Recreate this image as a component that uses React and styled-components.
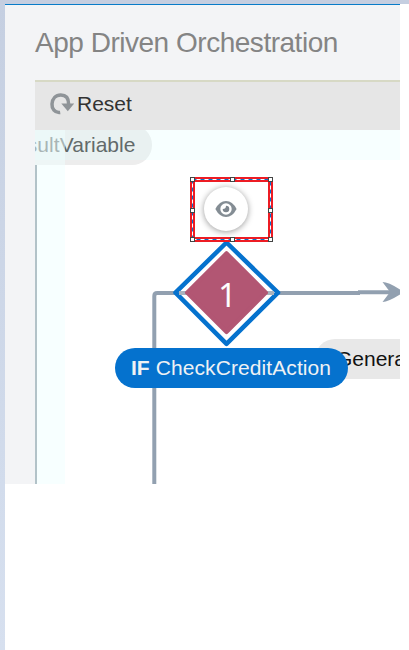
import React from "react";
import styled, { createGlobalStyle } from "styled-components";

const GlobalStyle = createGlobalStyle`
  * { box-sizing: border-box; }
  body { margin: 0; background: #fff; font-family: "Liberation Sans", Arial, sans-serif; }
`;

const Page = styled.main`
  width: 409px;
  height: 650px;
  display: grid;
  grid-template: 4px 480px 1fr / 5px 395px 1fr;
  overflow: hidden;
`;

const TopEdge = styled.div`
  grid-area: 1 / 1 / 2 / 4;
  background: #c5cee0;
`;

const SideEdge = styled.div`
  grid-area: 2 / 1 / 4 / 2;
  background: linear-gradient(#c5cfe1, #d2dcec 480px, #d7e0ef);
`;

const Panel = styled.section`
  grid-area: 2 / 2 / 3 / 3;
  display: flex;
  flex-direction: column;
  padding-left: 30px;
  border-top: 1px solid #087bc8;
  background: #f3f4f6;
  overflow: hidden;
`;

const Title = styled.h1`
  flex: 0 0 75px;
  margin: 0;
  font-size: 28px;
  font-weight: 400;
  line-height: 75px;
  letter-spacing: -0.48px;
  color: #848484;
  white-space: nowrap;
`;

const Toolbar = styled.div`
  flex: 0 0 50px;
  display: flex;
  align-items: center;
  padding: 0 0 4px 14px;
  border-top: 2px solid #d7d9c5;
  background: #e6e6e6;
`;

const ResetButton = styled.button`
  display: flex;
  align-items: center;
  gap: 3px;
  padding: 0;
  border: 0;
  background: none;
  font: 21px/24px "Liberation Sans", Arial, sans-serif;
  color: #333;
`;

const Canvas = styled.div`
  position: relative;
  flex: 1;
  overflow: hidden;
  background: #fff;
`;

const Node = styled.div`
  position: absolute;
  left: ${(p) => p.$x}px;
  top: ${(p) => p.$y}px;
  width: ${(p) => p.$w}px;
  height: 40px;
  padding-left: ${(p) => p.$pad}px;
  border-radius: 20px;
  background: ${(p) => p.$bg};
  color: ${(p) => p.$color};
  font-size: 21px;
  line-height: 39px;
  letter-spacing: ${(p) => p.$spacing || 0}px;
  white-space: nowrap;
`;

const CanvasEdge = styled.div`
  position: absolute;
  inset: 35px auto 0 0;
  width: 2px;
  background: #b2c2c8;
`;

const TopFade = styled.div`
  position: absolute;
  inset: 0 0 auto 0;
  height: 30px;
  background: rgba(220, 255, 255, 0.22);
`;

const LeftFade = styled.div`
  position: absolute;
  inset: 0 auto 0 0;
  width: 30px;
  background: rgba(240, 255, 255, 0.5);
`;

const Diagram = styled.svg`
  position: absolute;
  left: 0;
  top: 0;
`;

const PreviewButton = styled.button`
  position: absolute;
  left: 169px;
  top: 57px;
  width: 44px;
  height: 44px;
  display: grid;
  place-items: center;
  padding: 0;
  border: 0;
  border-radius: 50%;
  background: #fff;
  box-shadow: 0 1px 6px rgba(0, 0, 0, 0.4);
`;

const Bold = styled.b`
  margin-right: 6px;
  letter-spacing: 0;
`;

const ResetIcon = () => (
  <svg width="25" height="24" viewBox="0 0 25 24" fill="none">
    <path d="M11.2 20.5C5.7 21.3 2.7 16.5 3 12C3.4 6.5 6.7 3 11.8 3C17 3 19.6 6.5 19.6 12" stroke="#8f9498" strokeWidth="3.5" />
    <path d="M12.3 11.5H25.2L18.8 19.3Z" fill="#8f9498" />
  </svg>
);

const EyeIcon = () => (
  <svg width="22" height="18" viewBox="0 0 22 18" fill="none">
    <path d="M.4 9Q4.5 1 11 1Q17.5 1 21.6 9Q17.5 17 11 17Q4.5 17 .4 9Z" fill="#848d94" />
    <circle cx="11" cy="9" r="5.7" fill="#fff" />
    <path d="M11 5.7A3.3 3.3 0 1 1 7.7 9Q11 9 11 5.7Z" fill="#7d868e" />
  </svg>
);

const HANDLES = [
  [157.5, 49.5], [197.5, 49.5], [235.5, 49.5],
  [157.5, 80.5], [235.5, 80.5],
  [157.5, 109.5], [197.5, 109.5], [235.5, 109.5],
];

const FlowLines = () => (
  <Diagram width="365" height="354" fill="none">
    <path d="M119.3 354V166Q119.3 163 122.3 163H145" stroke="#92a0b0" strokeWidth="4" />
    <path d="M240 163H325" stroke="#92a0b0" strokeWidth="4" />
    <path d="M323 162.2H356" stroke="#92a0b0" strokeWidth="4" />
    <path d="M347.5 152Q354 152 369 162Q354 172 347.5 172L355 162Z" fill="#92a0b0" />
    <path d="M191.5 112.5L243 162.7L191.5 213.8L140.5 162.7Z" fill="#fff" stroke="#0572ce" strokeWidth="4.5" strokeLinejoin="round" />
    <path d="M144 163H239" stroke="#a9b3be" strokeWidth="4" />
    <path d="M191.5 123.2L231 162.7L191.5 202.2L152 162.7Z" fill="#b25673" stroke="#b25673" strokeWidth="4" strokeLinejoin="round" />
    <text x="192.5" y="177" textAnchor="middle" fill="#fff" stroke="#fff" strokeWidth="0.2" fontFamily="Open Sans, sans-serif" fontSize="32">1</text>
  </Diagram>
);

const Selection = () => (
  <Diagram width="365" height="354" fill="none">
    <rect x="157.5" y="49.5" width="78" height="60" stroke="#ed1c24" strokeWidth="5" />
    <rect x="157.5" y="49.5" width="78" height="60" stroke="#fff" />
    <rect x="157.5" y="49.5" width="78" height="60" stroke="#0572ce" strokeDasharray="4 4" />
    {HANDLES.map(([x, y]) => (
      <rect key={`${x}-${y}`} x={x - 2} y={y - 2} width="4" height="4" fill="#fff" stroke="#444" />
    ))}
  </Diagram>
);

export default function App() {
  return (
    <>
      <GlobalStyle />
      <Page>
        <TopEdge />
        <SideEdge />
        <Panel>
          <Title>App Driven Orchestration</Title>
          <Toolbar>
            <ResetButton><ResetIcon />Reset</ResetButton>
          </Toolbar>
          <Canvas>
            <Node $x={-60} $y={-5} $w={177} $pad={33} $spacing={0.05} $bg="#ededed" $color="#404040">resultVariable</Node>
            <TopFade />
            <LeftFade />
            <CanvasEdge />
            <FlowLines />
            <Node $x={280} $y={209} $w={140} $pad={21} $bg="#e8e8e8" $color="#111">General</Node>
            <Node $x={80} $y={218} $w={233} $pad={16} $spacing={0.09} $bg="#0572ce" $color="#eef1f4">
              <Bold>IF</Bold>CheckCreditAction
            </Node>
            <PreviewButton aria-label="Preview"><EyeIcon /></PreviewButton>
            <Selection />
          </Canvas>
        </Panel>
      </Page>
    </>
  );
}
